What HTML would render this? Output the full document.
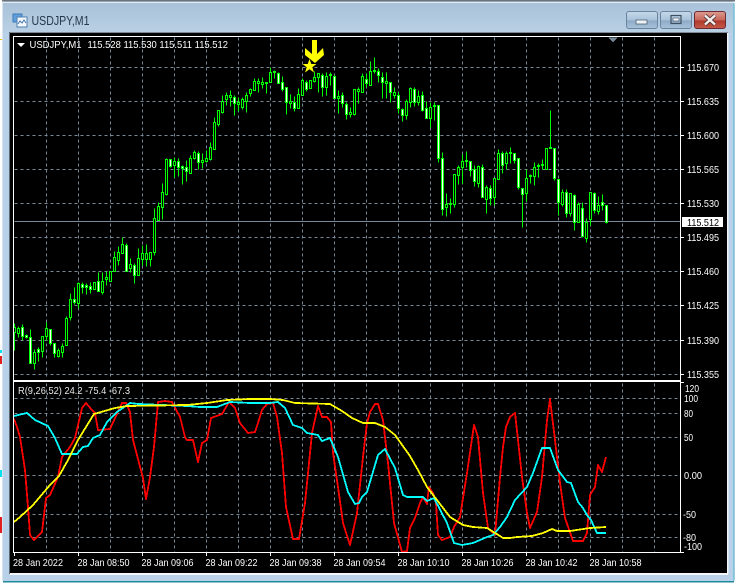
<!DOCTYPE html>
<html><head><meta charset="utf-8"><title>USDJPY,M1</title>
<style>
html,body{margin:0;padding:0;background:#fff;width:738px;height:584px;overflow:hidden}
svg{display:block}
text{font-family:"Liberation Sans",sans-serif;font-size:10.5px;fill:#fff}
</style></head><body>
<svg xmlns="http://www.w3.org/2000/svg" width="738" height="584" viewBox="0 0 738 584">
<defs>
<linearGradient id="t" x1="0" y1="0" x2="0" y2="1"><stop offset="0" stop-color="#a9c2d9"/><stop offset="1" stop-color="#b9d0e4"/></linearGradient>
<linearGradient id="b" x1="0" y1="0" x2="0" y2="1"><stop offset="0" stop-color="#c6d9ea"/><stop offset=".5" stop-color="#a9c3da"/><stop offset=".55" stop-color="#8eaac6"/><stop offset="1" stop-color="#a8c4dc"/></linearGradient>
<linearGradient id="c" x1="0" y1="0" x2="0" y2="1"><stop offset="0" stop-color="#dc9c90"/><stop offset=".5" stop-color="#c9665a"/><stop offset=".55" stop-color="#b03a2c"/><stop offset="1" stop-color="#c65a48"/></linearGradient>
</defs>
<rect width="738" height="584" fill="#fff"/>
<!-- left side artefacts -->
<rect x="0" y="350" width="2" height="3" fill="#00e0f0"/><rect x="0" y="356" width="2" height="8" fill="#e02020"/><rect x="0" y="470" width="2" height="7" fill="#00e0f0"/><rect x="0" y="517" width="2" height="16" fill="#e02020"/><rect x="0" y="39" width="2" height="1" fill="#e0c000"/>
<!-- window frame -->
<rect x="2" y="1" width="733" height="581" rx="4" fill="#b9d1e8"/>
<rect x="2" y="0" width="733" height="1.5" fill="#6b747c"/>
<rect x="3" y="2" width="731" height="1" fill="#e4edf4"/>
<rect x="3" y="3" width="731" height="30" fill="url(#t)"/>
<rect x="2" y="2" width="1" height="579" fill="#d8e4ee"/>
<rect x="3" y="581" width="731" height="1.5" fill="#1f8a9c"/>
<rect x="733" y="3" width="1.5" height="578" fill="#7fc4da"/>
<rect x="9" y="32" width="719" height="1" fill="#7d8a96"/>
<rect x="9" y="32" width="1" height="542" fill="#5d6a76"/>
<rect x="10" y="33" width="717" height="540" fill="#000"/>
<rect x="10" y="573" width="718" height="2" fill="#f2f6fa"/>
<rect x="727" y="33" width="1.5" height="541" fill="#f2f6fa"/>
<!-- title icon -->
<rect x="13" y="14" width="9" height="8" fill="#5f9fdc" stroke="#3a78b8"/>
<rect x="17" y="17" width="10" height="10" fill="#f4f8fc" stroke="#4f7fb0"/>
<path d="M18 24l2-3 2 2 2-3 2 3" fill="none" stroke="#4477aa"/>
<text x="31.5" y="25" textLength="58" lengthAdjust="spacingAndGlyphs" style="font-size:12.5px;fill:#26384a">USDJPY,M1</text>
<!-- buttons -->
<rect x="626.5" y="11.5" width="31" height="17" rx="2.5" fill="url(#b)" stroke="#6a84a0"/>
<rect x="636" y="20" width="11" height="4" fill="#eef3f8" stroke="#4f5f70" stroke-width=".8"/>
<rect x="660.5" y="11.5" width="31" height="17" rx="2.5" fill="url(#b)" stroke="#6a84a0"/>
<rect x="671" y="15.5" width="10" height="8" fill="none" stroke="#3f4f60" stroke-width="1.2"/><rect x="673" y="18" width="6" height="3" fill="#eef3f8" stroke="#3f4f60" stroke-width=".6"/>
<rect x="694.5" y="11.5" width="31" height="17" rx="2.5" fill="url(#c)" stroke="#6e2a34"/>
<path d="M705 15.5l10 9M715 15.5l-10 9" stroke="#4a3236" stroke-width="4"/>
<path d="M705 15.5l10 9M715 15.5l-10 9" stroke="#f4f0ee" stroke-width="2.4"/>
<!-- grid -->
<g transform="translate(.5 .5)" shape-rendering="crispEdges" fill="none">
<path stroke="#778899" stroke-dasharray="3 3" d="M14 67H680M14 101H680M14 135H680M14 169H680M14 203H680M14 237H680M14 271H680M14 305H680M14 340H680M14 374H680M14 398H680M14 413H680M14 437H680M14 475H680M14 514H680M14 537H680"/>
<path stroke="#778899" stroke-dasharray="3 3" d="M46 37V378M78 37V378M110 37V378M142 37V378M174 37V378M206 37V378M238 37V378M270 37V378M302 37V378M334 37V378M366 37V378M398 37V378M430 37V378M462 37V378M494 37V378M526 37V378M558 37V378M590 37V378M622 37V378M654 37V378M46 383V552M78 383V552M110 383V552M142 383V552M174 383V552M206 383V552M238 383V552M270 383V552M302 383V552M334 383V552M366 383V552M398 383V552M430 383V552M462 383V552M494 383V552M526 383V552M558 383V552M590 383V552M622 383V552M654 383V552"/>
<path stroke="#778899" d="M14 221H680"/>
<path d="M608 37h9l-4.500 5z" fill="#778899"/>
<!-- wicks -->
<path stroke="#00ff00" d="M14 323V350M18 326V337M22 324V340M26 334V338M30 329V363M34 349V369M38 347V361M42 336V357M46 322V340M50 329V345M54 343V357M58 348V357M62 343V357M66 316V345M70 293V320M74 287V304M78 282V308M82 282V293M86 283V294M90 282V293M94 282V289M98 272V291M102 272V294M106 271V285M110 271V281M114 251V271M118 246V265M122 237V253M126 243V271M130 258V272M134 263V283M138 248V275M142 245V265M146 244V266M150 252V266M154 208V255M158 202V220M162 183V219M166 158V195M170 159V167M174 157V177M178 158V176M182 165V184M186 160V181M190 155V173M194 150V159M198 151V169M202 153V168M206 150V162M210 142V160M214 117V149M218 110V126M222 95V113M226 92V105M230 90V106M234 95V115M238 97V111M242 97V109M246 92V112M250 88V96M254 78V90M258 78V92M262 77V88M266 82V93M270 67V82M274 70V78M278 72V83M282 76V91M286 87V114M290 94V108M294 96V111M298 88V108M302 78V95M306 80V91M310 80V88M314 71V82M318 73V92M322 73V96M326 72V95M330 72V85M334 75V98M338 90V113M342 92V107M346 102V119M350 107V117M354 89V115M358 87V103M362 73V92M366 73V87M370 61V85M374 57V73M378 68V82M382 72V98M386 72V98M390 82V102M394 87V98M398 92V113M402 108V121M406 99V119M410 87V107M414 87V106M418 90V105M422 91V111M426 101V118M430 102V127M434 102V120M438 105V162M442 152V215M446 193V216M450 198V213M454 174V207M458 165V184M462 154V183M466 151V167M470 161V176M474 165V186M478 165V187M482 164V197M486 185V213M490 185V205M494 178V205M498 149V179M502 151V173M506 151V169M510 147V163M514 153V163M518 158V189M522 188V227M526 169V201M530 174V183M534 162V185M538 163V177M542 159V169M546 148V169M550 110V148M554 148V180M558 179V215M562 189V206M566 189V217M570 193V216M574 194V230M578 202V222M582 202V237M586 218V242M590 192V225M594 192V213M598 196V214M602 194V210M606 205V223"/>
<!-- black bodies -->
<path fill="#000" stroke="#00ff00" d="M13 327h2V332h-2zM17 328h2V333h-2zM33 352h2V363h-2zM41 336h2V351h-2zM45 328h2V336h-2zM57 350h2V356h-2zM61 346h2V352h-2zM65 318h2V345h-2zM69 299h2V317h-2zM77 283h2V303h-2zM93 282h2V289h-2zM101 281h2V292h-2zM105 277h2V279h-2zM109 271h2V281h-2zM113 257h2V271h-2zM117 252h2V260h-2zM121 244h2V253h-2zM129 264h2V268h-2zM137 258h2V275h-2zM141 253h2V259h-2zM145 253h2V259h-2zM149 252h2V259h-2zM153 218h2V252h-2zM157 206h2V220h-2zM161 192h2V207h-2zM165 159h2V194h-2zM173 161h2V165h-2zM189 158h2V173h-2zM193 152h2V158h-2zM201 160h2V162h-2zM205 158h2V161h-2zM209 147h2V159h-2zM213 122h2V149h-2zM217 110h2V124h-2zM221 101h2V112h-2zM225 95h2V99h-2zM229 95h2V97h-2zM237 102h2V104h-2zM241 99h2V107h-2zM245 95h2V101h-2zM249 89h2V93h-2zM253 81h2V90h-2zM257 81h2V83h-2zM261 82h2V84h-2zM265 82h2V83h-2zM269 72h2V82h-2zM273 71h2V72h-2zM289 101h2V103h-2zM297 94h2V108h-2zM301 80h2V95h-2zM309 80h2V88h-2zM313 77h2V81h-2zM317 73h2V77h-2zM325 76h2V87h-2zM329 74h2V75h-2zM337 96h2V98h-2zM349 112h2V114h-2zM353 89h2V114h-2zM357 89h2V91h-2zM361 76h2V92h-2zM369 71h2V85h-2zM373 70h2V71h-2zM385 81h2V83h-2zM393 92h2V95h-2zM405 101h2V115h-2zM409 88h2V102h-2zM417 96h2V102h-2zM429 107h2V118h-2zM433 105h2V106h-2zM445 204h2V207h-2zM449 203h2V204h-2zM453 174h2V204h-2zM457 167h2V175h-2zM461 161h2V167h-2zM465 160h2V161h-2zM477 166h2V183h-2zM485 187h2V199h-2zM493 178h2V197h-2zM497 153h2V179h-2zM505 153h2V163h-2zM509 152h2V153h-2zM525 178h2V193h-2zM529 175h2V176h-2zM533 167h2V176h-2zM537 165h2V166h-2zM541 164h2V165h-2zM545 148h2V169h-2zM549 147h2V148h-2zM561 192h2V204h-2zM569 193h2V213h-2zM577 204h2V222h-2zM585 222h2V238h-2zM589 192h2V219h-2zM597 205h2V211h-2z"/>
<!-- white bodies -->
<path fill="#fff" stroke="#00ff00" d="M21 327h2V336h-2zM25 335h2V337h-2zM29 337h2V363h-2zM37 349h2V352h-2zM49 329h2V343h-2zM53 343h2V353h-2zM73 299h2V302h-2zM81 284h2V287h-2zM85 285h2V287h-2zM89 286h2V289h-2zM97 281h2V291h-2zM125 245h2V271h-2zM133 265h2V275h-2zM169 159h2V166h-2zM177 161h2V167h-2zM181 166h2V168h-2zM185 167h2V171h-2zM197 153h2V162h-2zM233 97h2V103h-2zM277 73h2V83h-2zM281 82h2V89h-2zM285 87h2V102h-2zM293 102h2V108h-2zM305 82h2V89h-2zM321 75h2V87h-2zM333 76h2V98h-2zM341 95h2V103h-2zM345 104h2V114h-2zM365 79h2V83h-2zM377 71h2V75h-2zM381 77h2V82h-2zM389 82h2V92h-2zM397 95h2V108h-2zM401 109h2V115h-2zM413 89h2V102h-2zM421 95h2V110h-2zM425 108h2V118h-2zM437 105h2V158h-2zM441 158h2V209h-2zM469 161h2V170h-2zM473 169h2V181h-2zM481 167h2V197h-2zM489 188h2V198h-2zM501 153h2V165h-2zM513 153h2V160h-2zM517 158h2V187h-2zM521 188h2V194h-2zM553 148h2V178h-2zM557 179h2V202h-2zM565 192h2V213h-2zM573 195h2V222h-2zM581 208h2V236h-2zM593 193h2V210h-2zM601 202h2V205h-2zM605 205h2V222h-2z"/>
</g>
<!-- arrow + star -->
<polygon fill="#ffff00" points="312,40 317,40 317,54 323,48 324,55 315,63 305,55 305,48 312,54"/>
<polygon fill="#ffff00" points="309.500,59 311.300,64 316.500,64 312.300,67.300 314,72.500 309.500,69.300 305,72.500 306.700,67.300 302.500,64 307.700,64"/>
<!-- indicator -->
<g fill="none" stroke-width="1.8" shape-rendering="crispEdges" stroke-linejoin="round">
<polyline stroke="#ff0000" points="14,419 17,427 20,437 25,470 28,507 30,535 34,540 42,532 46,498 50,495 58,477 62,457 70,447 75,438 82,408 86,403 92,410 95,413 98,430 110,429 122,403 126,403 130,412 133,440 143,478 146,499 150,477 154,447 158,402 165,401 172,402 180,417 185,437 187,440 193,440 198,462 202,443 207,440 211,418 222,414 229,402 235,408 240,423 248,433 255,432 258,423 262,410 267,404 273,403 277,417 282,453 286,507 293,539 299,539 305,503 312,433 318,406 322,417 327,417 331,422 333,453 338,487 343,523 350,545 357,513 363,457 367,423 370,412 375,404 378,404 383,420 388,463 394,523 402,552 407,551 410,528 415,518 420,503 423,497 427,504 429,487 433,493 436,503 438,535 442,540 450,537 454,527 460,517 467,473 474,425 478,437 483,493 488,528 495,535 500,477 503,447 506,427 510,417 515,413 518,440 522,477 527,513 530,528 537,512 542,477 547,420 550,399 555,440 560,483 565,518 573,541 583,541 587,533 590,495 595,487 598,465 602,472 606,457"/>
<polyline stroke="#00ffff" points="14,416 27,413 35,420 48,426 55,438 62,454 77,454 83,447 88,446 93,438 100,435 107,422 117,412 130,403 138,404 187,406 200,407 217,407 230,402 250,403 270,403 278,402 285,408 293,425 302,428 307,433 318,435 322,441 330,438 338,457 348,492 355,504 359,503 362,497 367,492 378,455 385,449 395,468 403,495 407,497 423,497 427,501 434,498 447,523 454,543 462,545 473,543 487,537 493,535 500,527 507,517 515,500 527,487 533,473 542,448 550,448 558,470 567,482 571,483 578,502 583,508 587,515 591,520 597,533 606,533"/>
<polyline stroke="#ffff00" points="14,522 20,517 33,505 50,485 59,476 68,460 78,440 94,414 115,408 127,406 187,405 207,403 227,400 250,399 270,399 283,400 295,403 330,404 342,411 352,418 363,423 375,423 385,427 395,435 410,456 418,470 427,487 450,517 463,525 473,527 487,528 500,536 503,538 510,538 517,537 532,536 543,533 552,529 557,531 570,531 590,528 606,527"/>
</g>
<!-- borders and ticks -->
<g fill="#fff" shape-rendering="crispEdges">
<rect x="13" y="36" width="668" height="1"/>
<rect x="13" y="380" width="668" height="2"/>
<rect x="13" y="552" width="668" height="1"/>
<rect x="13" y="36" width="1" height="517"/>
<rect x="680" y="36" width="1" height="517"/>
<path d="M681 67h3v1h-3zM681 101h3v1h-3zM681 135h3v1h-3zM681 169h3v1h-3zM681 203h3v1h-3zM681 237h3v1h-3zM681 271h3v1h-3zM681 305h3v1h-3zM681 340h3v1h-3zM681 374h3v1h-3zM681 382h3v1h-3zM681 552h3v1h-3z"/>
<path d="M14 553h1v3h-1zM78 553h1v3h-1zM142 553h1v3h-1zM206 553h1v3h-1zM270 553h1v3h-1zM334 553h1v3h-1zM398 553h1v3h-1zM462 553h1v3h-1zM526 553h1v3h-1zM590 553h1v3h-1z"/>
<rect x="682" y="217" width="41" height="10"/>
</g>
<polygon points="17,43 25,43 21,47" fill="#fff"/>
<!-- labels -->
<text x="29.500" y="48" textLength="52" lengthAdjust="spacingAndGlyphs">USDJPY,M1</text>
<text x="87.500" y="48" textLength="140.500" lengthAdjust="spacingAndGlyphs">115.528 115.530 115.511 115.512</text>
<text x="18" y="394" textLength="112" lengthAdjust="spacingAndGlyphs" style="fill:#e8e8e8">R(9,26,52) 24.2 -75.4 -67.3</text>
<g>
<text x="687" y="71" textLength="32" lengthAdjust="spacingAndGlyphs">115.670</text>
<text x="687" y="105" textLength="32" lengthAdjust="spacingAndGlyphs">115.635</text>
<text x="687" y="139" textLength="32" lengthAdjust="spacingAndGlyphs">115.600</text>
<text x="687" y="173" textLength="32" lengthAdjust="spacingAndGlyphs">115.565</text>
<text x="687" y="207" textLength="32" lengthAdjust="spacingAndGlyphs">115.530</text>
<text x="687" y="241" textLength="32" lengthAdjust="spacingAndGlyphs">115.495</text>
<text x="687" y="275" textLength="32" lengthAdjust="spacingAndGlyphs">115.460</text>
<text x="687" y="309" textLength="32" lengthAdjust="spacingAndGlyphs">115.425</text>
<text x="687" y="344" textLength="32" lengthAdjust="spacingAndGlyphs">115.390</text>
<text x="687" y="378" textLength="32" lengthAdjust="spacingAndGlyphs">115.355</text>
<text x="687" y="226" textLength="32" lengthAdjust="spacingAndGlyphs" style="fill:#000">115.512</text>
<text x="685" y="392" textLength="14" lengthAdjust="spacingAndGlyphs">120</text>
<text x="684" y="402" textLength="14" lengthAdjust="spacingAndGlyphs">100</text>
<text x="684" y="417" textLength="9" lengthAdjust="spacingAndGlyphs">80</text>
<text x="684" y="441" textLength="9" lengthAdjust="spacingAndGlyphs">50</text>
<text x="684" y="479" textLength="18" lengthAdjust="spacingAndGlyphs">0.00</text>
<text x="683" y="518" textLength="13" lengthAdjust="spacingAndGlyphs">-50</text>
<text x="683" y="541" textLength="13" lengthAdjust="spacingAndGlyphs">-80</text>
<text x="684" y="550" textLength="18" lengthAdjust="spacingAndGlyphs">-100</text>
</g>
<g>
<text x="13" y="566" textLength="50" lengthAdjust="spacingAndGlyphs">28 Jan 2022</text>
<text x="77.500" y="566" textLength="52" lengthAdjust="spacingAndGlyphs">28 Jan 08:50</text>
<text x="141.500" y="566" textLength="52" lengthAdjust="spacingAndGlyphs">28 Jan 09:06</text>
<text x="205.500" y="566" textLength="52" lengthAdjust="spacingAndGlyphs">28 Jan 09:22</text>
<text x="269.500" y="566" textLength="52" lengthAdjust="spacingAndGlyphs">28 Jan 09:38</text>
<text x="333.500" y="566" textLength="52" lengthAdjust="spacingAndGlyphs">28 Jan 09:54</text>
<text x="397.500" y="566" textLength="52" lengthAdjust="spacingAndGlyphs">28 Jan 10:10</text>
<text x="461.500" y="566" textLength="52" lengthAdjust="spacingAndGlyphs">28 Jan 10:26</text>
<text x="525.500" y="566" textLength="52" lengthAdjust="spacingAndGlyphs">28 Jan 10:42</text>
<text x="589.500" y="566" textLength="52" lengthAdjust="spacingAndGlyphs">28 Jan 10:58</text>
</g>
</svg>
</body></html>
